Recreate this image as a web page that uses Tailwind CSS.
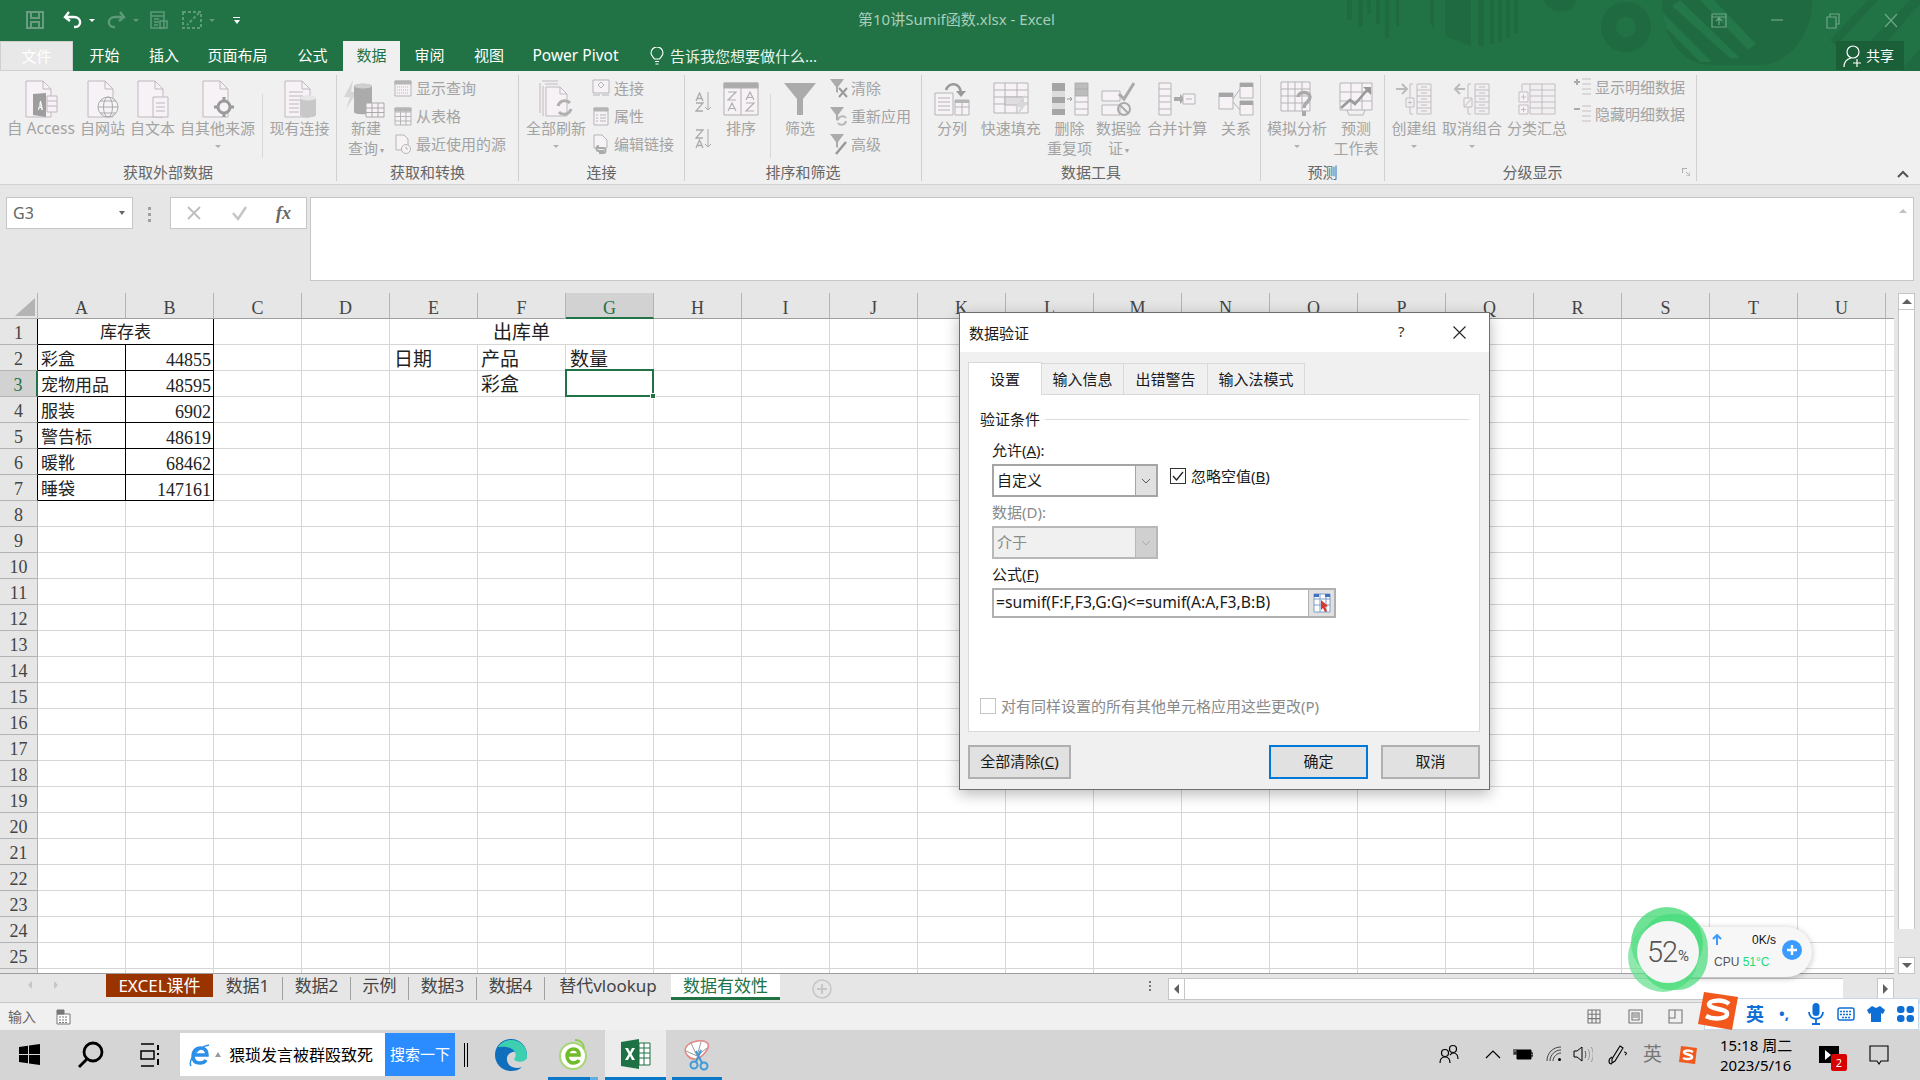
<!DOCTYPE html>
<html lang="zh-CN">
<head>
<meta charset="UTF-8" />
<title>第10讲Sumif函数.xlsx - Excel</title>
<script src="https://cdn.jsdelivr.net/npm/@tailwindcss/browser@4"></script>
</head>
<body class="[font-family:'Noto_Sans','Noto_Sans_CJK_SC',sans-serif] text-[15px] bg-[#e6e6e6] overflow-hidden">
<div class="relative w-[1920px] h-[1080px] flex flex-col overflow-hidden">

  <!-- title bar + tabs -->
  <header class="relative h-[71px] bg-[#217346] shrink-0 overflow-hidden">
    <svg class="absolute left-[1340px] top-0" width="580" height="71" viewBox="0 0 580 71" fill="#1f6a40">
      <path d="M7 0h5v20H7zM18 0h5v27H18zM27 0h4v14h-4zM36 0h4v24h-4zM45 0h4v38h-4zM56 0h3v26h-3z"/>
      <path d="M90 0h4v30l-4-8zM105 0h26v46l-26-10zM138 0h6v46h-6zM150 0h4v44h-4zM158 0h4v42h-4zM166 0h4v38h-4zM174 0h4v33h-4z"/>
      <path d="M204 0h33a17 15 0 0 1-33 0z"/>
      <path fill-rule="evenodd" d="M286 2a25 25 0 1 0 .01 0zM286 17a10 10 0 1 1-.01 0z"/>
      <path d="M322 0h150c2 30-22 65-52 65h-52c-30-2-48-35-46-65z"/>
      <path fill="#247a4b" d="M340 0l60 58h-10l-58-52zM360 0h14l42 44-8 6zM322 12l50 50h-12L326 28z" opacity=".8"/>
      <path d="M490 40L528 0h10L496 46zM510 62L570 0h10v4L522 70zM560 71l20-22v22z"/>
    </svg>
    <!-- quick access -->
    <div class="absolute left-[26px] top-[10px] flex items-center h-[20px]">
      <svg width="18" height="18" viewBox="0 0 18 18" fill="none" stroke="#6a9c80" stroke-width="2"><path d="M1 1h16v16H1z"/><path d="M5 1v6h8V1M5 17v-6h8v6"/></svg>
      <svg class="ml-[19px]" width="19" height="18" viewBox="0 0 19 18" fill="none" stroke="#fff" stroke-width="2.4"><path d="M6 1L2 6l5 4"/><path d="M3 6h8c8 0 8 10 1 10h-1"/></svg>
      <span class="ml-[7px] w-0 h-0 border-x-[3px] border-x-transparent border-t-[3px] border-t-white"></span>
      <svg class="ml-[12px]" width="19" height="18" viewBox="0 0 19 18" fill="none" stroke="#5d9a78" stroke-width="2.4"><path d="M13 1l4 5-5 4"/><path d="M16 6H8c-8 0-8 10-1 10h1"/></svg>
      <span class="ml-[7px] w-0 h-0 border-x-[3px] border-x-transparent border-t-[3px] border-t-[#5d9a78]"></span>
      <svg class="ml-[11px]" width="18" height="18" viewBox="0 0 18 18" fill="none" stroke="#5d9a78" stroke-width="1.5"><path d="M1 1h13v16H1zM1 5h13M4 8h5M4 11h5M4 14h4"/><path d="M10 10h7v7h-7z"/></svg>
      <svg class="ml-[14px]" width="21" height="18" viewBox="0 0 21 18" fill="none" stroke="#5d9a78" stroke-width="2" stroke-dasharray="3 2"><path d="M1 1h18v16H1z"/><path d="M17 2L5 14"/></svg>
      <span class="ml-[6px] w-0 h-0 border-x-[3px] border-x-transparent border-t-[3px] border-t-[#5d9a78]"></span>
      <div class="ml-[18px] flex flex-col gap-[2px] items-center"><span class="w-[7px] h-[1px] bg-white"></span><span class="w-0 h-0 border-x-[3.5px] border-x-transparent border-t-[4px] border-t-white"></span></div>
    </div>
    <div class="absolute left-[858px] top-[8px] leading-[22px] text-[#a9cdb9] whitespace-nowrap">第10讲Sumif函数.xlsx - Excel</div>
    <!-- window buttons -->
    <svg class="absolute left-[1711px] top-[11px]" width="190" height="18" viewBox="0 0 190 18" fill="none" stroke="#6fa688" stroke-width="1.2">
      <path d="M1 3h14v13H1zM1 6h14M8 14V8M5 10l3-3 3 3"/>
      <path d="M60 9h12"/>
      <path d="M116 6h9v11h-9zM119 6V3h9v10h-3"/>
      <path d="M174 3l12 13M186 3l-12 13"/>
    </svg>
    <!-- tabs -->
    <nav class="absolute left-0 top-[41px] h-[30px] flex text-white text-[15px] leading-[29px] text-center whitespace-nowrap">
      <div class="w-[73px] bg-[#e8e8e8] border border-[#d0d0d0] text-white">文件</div>
      <div class="w-[62px] pl-[1px]">开始</div>
      <div class="w-[58px]">插入</div>
      <div class="w-[89px]">页面布局</div>
      <div class="w-[61px]">公式</div>
      <div class="w-[57px] bg-[#f0f0f0] text-[#217346]">数据</div>
      <div class="w-[59px]">审阅</div>
      <div class="w-[60px]">视图</div>
      <div class="w-[115px] text-[15.5px] -translate-x-[1px]">Power Pivot</div>
      <div class="ml-[16px] flex items-center">
        <svg width="14" height="18" viewBox="0 0 14 18" fill="none" stroke="#fff" stroke-width="1.1"><path d="M4.5 12C3 9.5 1 8.5 1 6a6 6 0 0 1 12 0c0 2.500-2 3.500-3.500 6zM5 14.500h4M5.500 17h3"/></svg>
        <span class="ml-[6px] text-[#e8f3ec]">告诉我您想要做什么...</span>
      </div>
    </nav>
    <div class="absolute left-[1836px] top-[41px] w-[68px] h-[29px] bg-[#1b5f39] flex items-center pl-[7px] text-white text-[14px]">
      <svg width="20" height="24" viewBox="0 0 20 24" fill="none" stroke="#fff" stroke-width="1.2"><circle cx="10" cy="8" r="6"/><path d="M1 23c0-5 3-8 7-9M14 15v8M10 19h8"/></svg>
      <span class="ml-[3px]">共享</span>
    </div>
  </header>

  <!-- ribbon -->
  <section class="relative h-[114px] shrink-0 bg-[#f0f0f0] border-b border-[#d2d2d2] pt-[4px] pb-[3px] flex text-[#a3a3a3] text-[15px] leading-[20px] whitespace-nowrap">

    <!-- 获取外部数据 -->
    <div class="w-[337px] border-r border-[#d0d0d0] flex flex-col">
      <div class="flex-1 flex pl-[5px] pt-[5px]">
        <div class="w-[72px] flex flex-col items-center">
          <svg class="h-[38px]" width="36" height="38" viewBox="0 0 36 38" fill="none" stroke="#c0b8c0"><path fill="#f6f2f6" d="M3 1h17l8 8v28H3z"/><path d="M20 1v8h8"/><path fill="#9d9d9d" stroke="none" d="M10 14l13-1v24l-13-2z"/><path fill="#fff" stroke="none" d="M15 30l2-9h1l2 9h-1.500l-.4-2h-1.700l-.4 2zM16.300 26.800h1.300l-.6-3.300z"/><path fill="#f6f2f6" d="M24 16h10v16H24z"/><path d="M24 21h10M24 26h10"/></svg>
          <span class="text-[15.5px]">自 Access</span>
        </div>
        <div class="ml-[1px] w-[49px] flex flex-col items-center">
          <svg class="h-[38px]" width="34" height="38" viewBox="0 0 34 38" fill="none" stroke="#c0b8c0"><path fill="#f6f2f6" d="M2 1h17l8 8v28H2z"/><path d="M19 1v8h8"/><circle cx="22" cy="27" r="10" fill="#f6f2f6" stroke="#aaa"/><ellipse cx="22" cy="27" rx="4.500" ry="10" stroke="#aaa"/><path stroke="#aaa" d="M12 27h20M14 21h16M14 33h16"/></svg>
          <span>自网站</span>
        </div>
        <div class="ml-[1px] w-[49px] flex flex-col items-center">
          <svg class="h-[38px]" width="34" height="38" viewBox="0 0 34 38" fill="none" stroke="#c0b8c0"><path fill="#f6f2f6" d="M2 1h17l8 8v28H2z"/><path d="M19 1v8h8"/><path fill="#f6f2f6" d="M17 17h15v20H17z"/><path d="M20 23h9M20 27h9M20 31h9"/></svg>
          <span>自文本</span>
        </div>
        <div class="ml-[1px] w-[79px] flex flex-col items-center">
          <svg class="h-[38px]" width="34" height="38" viewBox="0 0 34 38" fill="none" stroke="#c0b8c0"><path fill="#f6f2f6" d="M2 1h17l8 8v28H2z"/><path d="M19 1v8h8"/><circle cx="23" cy="27" r="6" fill="#f6f2f6" stroke="#9a9a9a" stroke-width="3"/><path stroke="#9a9a9a" stroke-width="3" d="M23 17v4M23 33v4M13 27h4M29 27h4"/></svg>
          <span>自其他来源</span>
          <span class="mt-[7px] w-0 h-0 border-x-[3px] border-x-transparent border-t-[3px] border-t-[#b0b0b0]"></span>
        </div>
        <span class="ml-[5px] mt-[14px] w-[1px] h-[64px] bg-[#d8d8d8]"></span>
        <div class="ml-[6px] w-[61px] flex flex-col items-center">
          <svg class="h-[38px]" width="34" height="38" viewBox="0 0 34 38" fill="none" stroke="#c0b8c0"><path fill="#f6f2f6" d="M2 1h17l8 8v28H2z"/><path d="M19 1v8h8M6 12h14M6 16h14M6 20h14M6 24h10M6 28h10M6 32h10"/><path fill="#c8c8c8" stroke="none" d="M17 18c0-3 16-3 16 0v17c0 3-16 3-16 0z"/><ellipse cx="25" cy="18" rx="8" ry="2.500" fill="#e6e6e6" stroke="none"/></svg>
          <span>现有连接</span>
        </div>
      </div>
      <div class="text-center text-[#666] h-[18px] leading-[18px]">获取外部数据</div>
    </div>

    <!-- 获取和转换 -->
    <div class="w-[182px] border-r border-[#d0d0d0] flex flex-col">
      <div class="flex-1 flex pl-[7px] pt-[5px]">
        <div class="w-[44px] flex flex-col items-center">
          <svg class="h-[38px] -ml-[4px]" width="42" height="38" viewBox="0 0 42 38"><path fill="#d6d6d6" d="M10 0L1 17h6L3 29l11-17H8z"/><path fill="#ababab" d="M11 6c0-3 18-3 18 0v26c0 3-18 3-18 0z"/><ellipse cx="20" cy="6" rx="9" ry="2.500" fill="#cfcfcf"/><path fill="#f6f2f6" stroke="#aaa" d="M23 23h18v14H23zM23 28h18M23 32.500h18M29 23v14M35 23v14"/></svg>
          <span>新建</span>
          <span>查询<i class="not-italic text-[8px] align-middle ml-[2px]">▾</i></span>
        </div>
        <div class="ml-[6px] -mt-[6px] flex flex-col">
          <div class="h-[28px] flex items-center"><svg width="18" height="17" viewBox="0 0 18 17" fill="#f6f2f6" stroke="#b5b5b5"><path d="M1 1h16v15H1z"/><path fill="#b5b5b5" d="M1 1h16v3H1z"/><path d="M3 7h12M3 10h12M3 13h12" stroke-dasharray="1 1"/></svg><span class="ml-[4px]">显示查询</span></div>
          <div class="h-[28px] flex items-center"><svg width="18" height="19" viewBox="0 0 18 19" fill="#f6f2f6" stroke="#b5b5b5"><path d="M1 1h16v17H1zM1 5h16M1 9.500h16M1 14h16M6.500 1v17M12 1v17"/><path fill="#b5b5b5" d="M1 1h16v3H1z"/></svg><span class="ml-[4px]">从表格</span></div>
          <div class="h-[28px] flex items-center"><svg width="18" height="20" viewBox="0 0 18 20" fill="#f6f2f6" stroke="#b5b5b5"><path d="M2 1h8l4 4v11H2z"/><circle cx="12" cy="15" r="4.500"/><path d="M12 12.500V15h2"/></svg><span class="ml-[4px]">最近使用的源</span></div>
        </div>
      </div>
      <div class="text-center text-[#666] h-[18px] leading-[18px]">获取和转换</div>
    </div>

    <!-- 连接 -->
    <div class="w-[166px] border-r border-[#d0d0d0] flex flex-col">
      <div class="flex-1 flex pl-[6px] pt-[5px]">
        <div class="w-[62px] flex flex-col items-center">
          <svg class="h-[38px]" width="36" height="38" viewBox="0 0 36 38" fill="none" stroke="#c0b8c0"><path d="M4 1h16M2 3v30"/><path d="M7 4h13M5 6v30" /><path fill="#f6f2f6" d="M8 7h14l7 7v22H8z"/><path d="M22 7v7h7"/><path stroke="#b0b0b0" stroke-width="3" d="M20 26a7 7 0 0 1 12-3M33 29a7 7 0 0 1-12 3"/></svg>
          <span>全部刷新</span>
          <span class="mt-[7px] w-0 h-0 border-x-[3px] border-x-transparent border-t-[3px] border-t-[#b0b0b0]"></span>
        </div>
        <div class="ml-[5px] -mt-[6px] flex flex-col">
          <div class="h-[28px] flex items-center"><svg width="18" height="18" viewBox="0 0 18 18" fill="#f6f2f6" stroke="#b5b5b5"><path d="M1 1h16v13H1z"/><path d="M9 3l3 3-3 3-3-3zM1 16h7M10 16h7"/></svg><span class="ml-[4px]">连接</span></div>
          <div class="h-[28px] flex items-center"><svg width="18" height="19" viewBox="0 0 18 19" fill="#f6f2f6" stroke="#b5b5b5"><path d="M2 1h14v17H2z"/><path fill="#b5b5b5" d="M2 1h14v3H2z"/><path d="M4 8h2M8 8h6M4 11h2M8 11h6M4 14h2M8 14h6"/></svg><span class="ml-[4px]">属性</span></div>
          <div class="h-[28px] flex items-center"><svg width="18" height="20" viewBox="0 0 18 20" fill="#f6f2f6" stroke="#b5b5b5"><path d="M2 1h8l5 5v8H2z"/><path fill="none" stroke="#aaa" stroke-width="2" d="M6 14h5a2.500 2.500 0 0 1 0 5H7M12 17H7a2.500 2.500 0 0 1 0-5"/></svg><span class="ml-[4px]">编辑链接</span></div>
        </div>
      </div>
      <div class="text-center text-[#666] h-[18px] leading-[18px]">连接</div>
    </div>

    <!-- 排序和筛选 -->
    <div class="w-[237px] border-r border-[#d0d0d0] flex flex-col">
      <div class="flex-1 flex pl-[10px] pt-[5px]">
        <div class="w-[18px] flex flex-col gap-[17px] pt-[12px]">
          <svg width="17" height="20" viewBox="0 0 17 20" fill="none" stroke="#aaa"><path stroke-width="1.300" d="M1 9l3.500-8L8 9M2.200 6.500h4.600M1 11h7l-7 8h7"/><path d="M13 0v18M10 15l3 3 3-3"/></svg>
          <svg width="17" height="20" viewBox="0 0 17 20" fill="none" stroke="#aaa"><path stroke-width="1.300" d="M1 1h7L1 9h7M1 19l3.500-8L8 19M2.200 16.500h4.600"/><path d="M13 0v18M10 15l3 3 3-3"/></svg>
        </div>
        <div class="ml-[8px] w-[40px] flex flex-col items-center">
          <svg class="h-[38px]" width="36" height="34" viewBox="0 0 36 34" fill="none" stroke="#b0b0b0"><path fill="#f6f2f6" d="M1 1h34v32H1zM18 1v32"/><path fill="#ababab" d="M1 1h34v5H1z"/><path stroke-width="1.200" d="M5 10h8l-8 8h8M5 29l4-8 4 8M6.200 26.500h5.600M23 18l4-8 4 8M24.200 15.500h5.600M23 21h8l-8 8h8"/></svg>
          <span>排序</span>
        </div>
        <span class="ml-[9px] mt-[14px] w-[1px] h-[64px] bg-[#d8d8d8]"></span>
        <div class="ml-[9px] w-[40px] flex flex-col items-center">
          <svg class="h-[38px]" width="34" height="34" viewBox="0 0 34 34" fill="#ababab"><path d="M1 1h32L20 17v16h-6V17z"/></svg>
          <span>筛选</span>
        </div>
        <div class="ml-[9px] -mt-[6px] flex flex-col">
          <div class="h-[28px] flex items-center"><svg width="19" height="20" viewBox="0 0 19 20"><path fill="#ababab" d="M1 1h14L9 9v6L7 14V9z"/><path stroke="#999" stroke-width="2" d="M10 10l8 9M18 10l-8 9"/></svg><span class="ml-[3px]">清除</span></div>
          <div class="h-[28px] flex items-center"><svg width="19" height="20" viewBox="0 0 19 20"><path fill="#ababab" d="M1 1h14L9 9v6L7 14V9z"/><path fill="none" stroke="#b8b8b8" stroke-width="2" d="M9 14a4.500 4.500 0 0 1 8-2M17 15a4.500 4.500 0 0 1-8 2"/></svg><span class="ml-[3px]">重新应用</span></div>
          <div class="h-[28px] flex items-center"><svg width="19" height="22" viewBox="0 0 19 22"><path fill="#ababab" d="M1 1h14L9 9v6L7 14V9z"/><path stroke="#999" stroke-width="2.500" d="M17 9L7 21"/></svg><span class="ml-[3px]">高级</span></div>
        </div>
      </div>
      <div class="text-center text-[#666] h-[18px] leading-[18px]">排序和筛选</div>
    </div>

    <!-- 数据工具 -->
    <div class="w-[339px] border-r border-[#d0d0d0] flex flex-col">
      <div class="flex-1 flex pl-[6px] pt-[5px]">
        <div class="w-[48px] flex flex-col items-center">
          <svg class="h-[38px]" width="36" height="34" viewBox="0 0 36 34" fill="none" stroke="#b5b5b5"><path fill="#f6f2f6" d="M1 11h18v22H1zM4 16h12M4 20h12M4 24h12M4 28h12"/><path fill="#f6f2f6" d="M21 18h14v15H21zM21 25h14M28 18v15"/><path fill="#b5b5b5" stroke="none" d="M21 18h14v3H21z"/><path stroke="#999" stroke-width="2.500" d="M12 8c3-8 13-8 15 2"/><path fill="#999" stroke="none" d="M22 9h10l-5 6z"/></svg>
          <span>分列</span>
        </div>
        <div class="w-[70px] flex flex-col items-center">
          <svg class="h-[38px]" width="36" height="34" viewBox="0 0 36 34" fill="#f6f2f6" stroke="#b5b5b5"><path d="M1 1h34v30H1zM1 8h34M1 15h34M1 22h34M12 1v30M24 1v30"/><path fill="#e0dce0" d="M12 15h18v8H12z"/><path fill="#d8d8d8" stroke="none" d="M32 12L22 25h5l-3 9 11-14h-6z"/></svg>
          <span>快速填充</span>
        </div>
        <div class="ml-[-4px] w-[56px] flex flex-col items-center">
          <svg class="h-[38px]" width="38" height="34" viewBox="0 0 38 34" fill="#f6f2f6" stroke="#b5b5b5"><path fill="#a5a5a5" stroke="none" d="M1 1h13v32H1z"/><path fill="#dcdcdc" stroke="none" d="M1 9h13v6H1zM1 21h13v6H1z"/><path d="M24 1h13v32H24zM24 7h13M24 14h13M24 20h13M24 27h13"/><path fill="#a5a5a5" stroke="none" d="M24 1h13v6H24zM24 7h13v7H24z" opacity=".7"/><path stroke="#999" d="M16 17h5M19 15l2 2-2 2"/></svg>
          <span>删除</span><span>重复项</span>
        </div>
        <div class="ml-[-3px] w-[48px] flex flex-col items-center">
          <svg class="h-[38px]" width="34" height="34" viewBox="0 0 34 34" fill="#f6f2f6" stroke="#b5b5b5"><path d="M1 9h18v10H1zM1 23h18v10H1z"/><path fill="none" stroke="#aaa" stroke-width="3" d="M18 12l5 5L33 1"/><circle cx="23" cy="27" r="6" fill="none" stroke="#aaa" stroke-width="2"/><path stroke="#aaa" stroke-width="2" d="M19 23l8 8"/></svg>
          <span>数据验</span>
          <span>证<i class="not-italic text-[8px] align-middle ml-[2px]">▾</i></span>
        </div>
        <div class="ml-[3px] w-[64px] flex flex-col items-center">
          <svg class="h-[38px]" width="38" height="34" viewBox="0 0 38 34" fill="#f6f2f6" stroke="#b5b5b5"><path d="M1 1h12v32H1zM1 7h12M1 14h12M1 20h12M1 27h12"/><path fill="#aaa" stroke="none" d="M16 15h6v-3l5 5-5 5v-3h-6z"/><path d="M25 12h12v10H25zM28 17h6"/></svg>
          <span>合并计算</span>
        </div>
        <div class="ml-[3px] w-[48px] flex flex-col items-center">
          <svg class="h-[38px]" width="36" height="34" viewBox="0 0 36 34" fill="#f6f2f6" stroke="#b5b5b5"><path d="M1 11h14v16H1zM22 1h13v15H22zM22 19h13v14H22zM15 17l7-10M15 20l7 8"/><path fill="#a5a5a5" stroke="none" d="M1 11h14v4H1zM22 1h13v4H22zM22 19h13v4H22z"/></svg>
          <span>关系</span>
        </div>
      </div>
      <div class="text-center text-[#666] h-[18px] leading-[18px]">数据工具</div>
    </div>

    <!-- 预测 -->
    <div class="w-[124px] border-r border-[#d0d0d0] flex flex-col">
      <div class="flex-1 flex pl-[5px] pt-[5px]">
        <div class="w-[62px] flex flex-col items-center">
          <svg class="h-[38px]" width="34" height="36" viewBox="0 0 34 36" fill="#f6f2f6" stroke="#b5b5b5"><path d="M1 1h29v29H1zM1 8h29M1 15h29M1 22h29M8 1v29M15 1v29M22 1v29"/><path fill="none" stroke="#aaa" stroke-width="3.500" d="M18 16c0-6 12-6 12 0 0 5-6 5-6 11"/><path fill="#aaa" stroke="none" d="M22 30h4v5h-4z"/></svg>
          <span>模拟分析</span>
          <span class="mt-[7px] w-0 h-0 border-x-[3px] border-x-transparent border-t-[3px] border-t-[#b0b0b0]"></span>
        </div>
        <div class="ml-[4px] w-[48px] flex flex-col items-center">
          <svg class="h-[38px]" width="34" height="34" viewBox="0 0 34 34" fill="#f6f2f6" stroke="#b5b5b5"><path d="M1 1h32v27H1zM1 10h32M1 19h32M12 1v27M23 1v27"/><path fill="none" stroke="#999" stroke-width="2.500" d="M2 26l9-8 5 4 13-15"/><path fill="#999" stroke="none" d="M24 5h8v8z"/><path fill="none" d="M8 28l2 5h14l2-5"/></svg>
          <span>预测</span><span>工作表</span>
        </div>
      </div>
      <div class="text-center text-[#666] h-[18px] leading-[18px]">预测</div>
    </div>

    <!-- 分级显示 -->
    <div class="relative w-[312px] border-r border-[#d0d0d0] flex flex-col">
      <div class="flex-1 flex pl-[6px] pt-[5px]">
        <div class="w-[46px] flex flex-col items-center">
          <svg class="h-[38px]" width="38" height="34" viewBox="0 0 38 34" fill="none" stroke="#c4bcc4"><path stroke="#bbb" stroke-width="2" d="M1 7h10M7 2l5 5-5 5"/><path d="M18 2h-3v14M15 25v7h3M22 2h14v30H22zM22 8h14M22 14h14M22 20h14M22 26h14"/><path d="M11 16h8v9h-8zM13 20.500h4M15 18.500v4"/><path d="M26 5h6M26 11h6M26 17h6M26 23h6M26 29h6"/></svg>
          <span>创建组</span>
          <span class="mt-[7px] w-0 h-0 border-x-[3px] border-x-transparent border-t-[3px] border-t-[#b0b0b0]"></span>
        </div>
        <div class="ml-[5px] w-[60px] flex flex-col items-center">
          <svg class="h-[38px]" width="38" height="34" viewBox="0 0 38 34" fill="none" stroke="#c4bcc4"><path stroke="#bbb" stroke-width="2" d="M12 7H2M7 2L2 7l5 5"/><path d="M18 2h-3v14M15 25v7h3M22 2h14v30H22zM22 8h14M22 14h14M22 20h14M22 26h14"/><path d="M11 16h8v9h-8zM12 24l6-7"/><path d="M26 5h6M26 11h6M26 17h6M26 23h6M26 29h6"/></svg>
          <span>取消组合</span>
          <span class="mt-[7px] w-0 h-0 border-x-[3px] border-x-transparent border-t-[3px] border-t-[#b0b0b0]"></span>
        </div>
        <div class="ml-[5px] w-[60px] flex flex-col items-center">
          <svg class="h-[38px]" width="38" height="34" viewBox="0 0 38 34" fill="none" stroke="#c4bcc4"><path d="M12 2H4v7M12 2h25v30H12zM12 8h25M12 14h25M12 20h25M12 26h25M24 2v30"/><path fill="#f6f2f6" d="M1 10h9v10H1zM1 23h9v9H1zM3 15h5M5.500 12.500v5M3 27.500h5M5.500 25v5"/></svg>
          <span>分类汇总</span>
        </div>
        <div class="ml-[7px] -mt-[7px] flex flex-col">
          <div class="h-[27px] flex items-center"><svg width="18" height="18" viewBox="0 0 18 18" fill="none" stroke="#c4bcc4"><path stroke="#aaa" stroke-width="2" d="M0 4h6M3 1v6"/><path d="M8 1h9M8 6h9M8 11h9M8 16h9"/></svg><span class="ml-[3px]">显示明细数据</span></div>
          <div class="h-[27px] flex items-center"><svg width="18" height="18" viewBox="0 0 18 18" fill="none" stroke="#c4bcc4"><path stroke="#aaa" stroke-width="2" d="M0 4h6"/><path d="M8 1h9M8 6h9M8 11h9M8 16h9"/></svg><span class="ml-[3px]">隐藏明细数据</span></div>
        </div>
      </div>
      <div class="text-center text-[#666] h-[18px] leading-[18px] -translate-x-[8px]">分级显示</div>
      <svg class="absolute right-[6px] bottom-[5px]" width="8" height="8" viewBox="0 0 8 8" fill="none" stroke="#b0b0b0"><path d="M0 .5h5M.5 0v5M4 4l4 4M8 4v4H4"/></svg>
    </div>
    <svg class="absolute left-[1897px] top-[99px]" width="12" height="8" viewBox="0 0 12 8" fill="none" stroke="#555" stroke-width="2"><path d="M1 7l5-5 5 5"/></svg>
  </section>

  <!-- formula bar -->
  <section class="h-[108px] shrink-0 bg-[#e6e6e6] pt-[12px] pl-[6px] flex items-start">
    <div class="w-[127px] h-[32px] bg-white border border-[#c6c6c6] flex items-center justify-between pl-[6px] pr-[7px] text-[#666] text-[16px]">G3<span class="w-0 h-0 border-x-[3.5px] border-x-transparent border-t-[4px] border-t-[#666]"></span></div>
    <div class="ml-[15px] mt-[10px] flex flex-col gap-[3px]"><span class="w-[3px] h-[3px] bg-[#a0a0a0]"></span><span class="w-[3px] h-[3px] bg-[#a0a0a0]"></span><span class="w-[3px] h-[3px] bg-[#a0a0a0]"></span></div>
    <div class="ml-[19px] w-[137px] h-[32px] bg-white border border-[#c6c6c6] flex items-center pl-[15px]">
      <svg width="16" height="16" viewBox="0 0 16 16" fill="none" stroke="#bdbdbd" stroke-width="1.800"><path d="M2 2l12 12M14 2L2 14"/></svg>
      <svg class="ml-[29px]" width="17" height="16" viewBox="0 0 17 16" fill="none" stroke="#c4c4c4" stroke-width="2.400"><path d="M2 8l5 6L15 2"/></svg>
      <span class="ml-[28px] italic text-[#666] font-bold text-[18px] [font-family:'Liberation_Serif',serif]">fx</span>
    </div>
    <div class="relative ml-[3px] w-[1604px] h-[84px] bg-white border border-[#c6c6c6]">
      <span class="absolute right-[6px] top-[11px] w-0 h-0 border-x-[4px] border-x-transparent border-b-[4px] border-b-[#c0c0c0]"></span>
    </div>
  </section>

  <!-- sheet -->
  <section class="h-[681px] shrink-0 flex bg-[#e6e6e6] overflow-hidden">
    <div id="grid" class="w-[1894px] h-[681px] grid grid-cols-[38px_repeat(21,88px)_8px] grid-rows-[26px_repeat(25,26px)_5px] bg-white border-b border-[#9e9e9e] [font-family:'Liberation_Serif','Noto_Sans_CJK_SC',serif] text-[18px] text-[#222] overflow-hidden"></div>
    <div class="ml-[4px] w-[17px] flex flex-col">
      <div class="h-[17px] bg-white border border-[#c6c6c6] flex items-center justify-center"><span class="w-0 h-0 border-x-[5px] border-x-transparent border-b-[5px] border-b-[#606060]"></span></div>
      <div class="flex-1 bg-white border-x border-[#c6c6c6] h-[619px]"></div>
      <div class="h-[28px] bg-[#e6e6e6]"></div>
      <div class="h-[17px] bg-white border border-[#c6c6c6] flex items-center justify-center"><span class="w-0 h-0 border-x-[5px] border-x-transparent border-t-[5px] border-t-[#606060]"></span></div>
    </div>
  </section>

  <!-- sheet tabs -->
  <section class="relative h-[29px] shrink-0 bg-[#e6e6e6] border-b border-[#c6c6c6] flex text-[17px] text-[#444] whitespace-nowrap">
    <div class="w-[104px] flex items-center pl-[28px] gap-[22px] pb-[6px]"><span class="w-0 h-0 border-y-[4px] border-y-transparent border-r-[4px] border-r-[#c6c6c6]"></span><span class="w-0 h-0 border-y-[4px] border-y-transparent border-l-[4px] border-l-[#c6c6c6]"></span></div>
    <div class="flex h-[23px] text-center leading-[18px] pt-[3px] box-content">
      <div class="w-[107px] ml-[2px] h-[23px] -mt-[3px] pt-[3px] bg-[#993300] text-white">EXCEL课件</div>
      <div class="w-[70px] border-r border-[#a0a0a0]">数据1</div>
      <div class="w-[68px] border-r border-[#a0a0a0]">数据2</div>
      <div class="w-[58px] border-r border-[#a0a0a0]">示例</div>
      <div class="w-[68px] border-r border-[#a0a0a0]">数据3</div>
      <div class="w-[68px] border-r border-[#a0a0a0]">数据4</div>
      <div class="w-[126px]">替代vlookup</div>
      <div class="w-[109px] h-[26px] -mt-[3px] pt-[3px] bg-white border-b-[3px] border-[#217346] text-[#217346]">数据有效性</div>
    </div>
    <svg class="absolute left-[812px] top-[5px]" width="20" height="20" viewBox="0 0 20 20" fill="none" stroke="#c6c6c6" stroke-width="1.500"><circle cx="10" cy="10" r="9"/><path stroke-width="2" d="M5 10h10M10 5v10"/></svg>
    <div class="absolute left-[1149px] top-[7px] flex flex-col gap-[2px]"><span class="w-[2px] h-[2px] bg-[#777]"></span><span class="w-[2px] h-[2px] bg-[#777]"></span><span class="w-[2px] h-[2px] bg-[#777]"></span></div>
    <div class="absolute left-[1168px] top-[4px] w-[726px] h-[22px] flex">
      <div class="w-[17px] bg-white border border-[#c6c6c6] flex items-center justify-center"><span class="w-0 h-0 border-y-[5px] border-y-transparent border-r-[5px] border-r-[#606060]"></span></div>
      <div class="w-[658px] bg-white border-y border-[#c6c6c6]"></div>
      <div class="w-[34px]"></div>
      <div class="w-[17px] bg-white border border-[#c6c6c6] flex items-center justify-center"><span class="w-0 h-0 border-y-[5px] border-y-transparent border-l-[5px] border-l-[#606060]"></span></div>
    </div>
  </section>

  <!-- status bar -->
  <section class="relative h-[27px] shrink-0 bg-[#f0f0f0] flex items-center pl-[8px] text-[14px] text-[#666]">
    <span>输入</span>
    <svg class="ml-[20px]" width="15" height="16" viewBox="0 0 15 16" fill="#fff" stroke="#777"><path d="M1 5h13v10H1z"/><path fill="#777" d="M1 1h7v4H1z"/><path stroke-dasharray="2 1" d="M3 8h9M3 11h9M3 13.500h9"/></svg>
    <svg class="absolute left-[1587px] top-[6px]" width="100" height="15" viewBox="0 0 100 15" fill="none" stroke="#777" stroke-width="1.100">
      <path d="M1 1h12v13H1zM1 5.300h12M1 9.600h12M5 1v13M9 1v13"/>
      <path d="M42 1h13v13H42zM45 4h7v7h-7zM46 6h5M46 8h5"/>
      <path d="M82 1h13v13H82zM82 9h6V1"/>
    </svg>
  </section>

  <!-- taskbar -->
  <footer class="relative h-[50px] shrink-0 bg-[#d5d5d5] text-black">
    <svg class="absolute left-[19px] top-[14px]" width="21" height="21" viewBox="0 0 21 21" fill="#000"><path d="M0 3l9-1.300V10H0zM10 1.500L21 0v10H10zM0 11h9v8.300L0 18zM10 11h11v10l-11-1.500z"/></svg>
    <svg class="absolute left-[77px] top-[11px]" width="28" height="28" viewBox="0 0 28 28" fill="none" stroke="#000" stroke-width="2.800"><circle cx="16" cy="11" r="9"/><path d="M10 18l-8 8"/></svg>
    <svg class="absolute left-[140px] top-[13px]" width="20" height="24" viewBox="0 0 20 24" fill="none" stroke="#000" stroke-width="1.500"><path d="M1 1h13M1 23h13M1 8h13v8H1z"/><path stroke-width="2" d="M18 2v5M18 10v2M18 16v6"/></svg>
    <div class="absolute left-[180px] top-[3px] w-[275px] h-[43px] bg-white flex items-center">
      <svg class="ml-[9px]" width="22" height="24" viewBox="0 0 22 24" fill="none" stroke="#2b8fe8"><path stroke-width="3.500" d="M5 12h13c0-5-3-7-7-7-4 0-7 3-7 8s3 7 7 7c3 0 5-1 6-3"/><path stroke-width="1.500" d="M2 23C-1 18 8 4 20 2"/></svg>
      <span class="ml-[4px] w-0 h-0 border-x-[3px] border-x-transparent border-b-[5px] border-b-[#999]"></span>
      <span class="ml-[8px] w-[147px] text-[16px] whitespace-nowrap">猥琐发言被群殴致死</span>
      <span class="ml-[9px] w-[70px] h-[43px] bg-[#2a8cff] text-white text-center leading-[43px] text-[15px]">搜索一下</span>
    </div>
    <div class="absolute left-[464px] top-[13px] w-[4px] h-[24px] border-x border-black"></div>
    <svg class="absolute left-[495px] top-[9px]" width="32" height="32" viewBox="0 0 32 32">
      <path fill="#0f6fbd" d="M16 0C7 0 0 7 0 16c0 9 7 16 16 16 4 0 8-1 11-4-5 2-14 1-15-7-1-5 4-9 9-8 5 0 9 3 11 7V16C32 7 25 0 16 0z"/>
      <path fill="#3dd0b0" d="M3 8c5-8 18-10 25-2 3 3 4 7 4 12-1 6-12 6-13 2 3-3 2-9-4-11C10 7 5 8 3 8z"/>
    </svg>
    <svg class="absolute left-[559px] top-[9px]" width="28" height="32" viewBox="0 0 28 32" fill="none"><circle cx="14" cy="17" r="13" fill="#fff" stroke="#a7d676" stroke-width="2"/><path stroke="#6fbb29" stroke-width="3.500" d="M8 16h12c0-4-2-6-6-6-3 0-6 3-6 7s3 7 6 7c3 0 5-1 6-3"/><path stroke="#8fce4a" stroke-width="2" d="M16 1c6 0 9 4 9 9"/></svg>
    <div class="absolute left-[605px] top-0 w-[61px] h-[50px] bg-[#ececec] border-b-[3px] border-[#0a78c8] flex items-center justify-center">
      <svg width="30" height="30" viewBox="0 0 30 30"><path fill="#1e7145" d="M0 3l18-3v30L0 27z"/><path fill="#fff" d="M4 9h3l2 4 2-4h3l-3.500 6 3.500 6h-3l-2-4-2 4H4l3.500-6z"/><path fill="#fff" stroke="#1e7145" d="M18 4h11v22H18z"/><path stroke="#1e7145" d="M18 9h11M18 14h11M18 19h11M23 4v22"/></svg>
    </div>
    <svg class="absolute left-[683px] top-[9px]" width="30" height="32" viewBox="0 0 30 32" fill="none"><path fill="#fff" stroke="#e28585" stroke-width="1.500" d="M3 8C8 1 22 0 25 5c2 4-5 13-12 15C7 21 0 14 3 8z"/><path stroke="#999" d="M8 4l6 13M18 3l-4 14M3 12l11 5M24 9l-10 8"/><circle cx="11" cy="26" r="3.500" stroke="#3f9bd9" stroke-width="2"/><circle cx="21" cy="27" r="3.500" stroke="#3f9bd9" stroke-width="2"/><path stroke="#3f9bd9" stroke-width="2" d="M13 23l5-12M19 24l-6-12"/></svg>
    <div class="absolute left-[548px] bottom-0 w-[42px] h-[3px] bg-[#0a78c8]"></div>
    <div class="absolute left-[590px] bottom-0 w-[8px] h-[3px] bg-[#66aee0]"></div>
    <div class="absolute left-[672px] bottom-0 w-[50px] h-[3px] bg-[#0a78c8]"></div>

    <!-- tray -->
    <svg class="absolute left-[1439px] top-[14px]" width="20" height="20" viewBox="0 0 20 20" fill="none" stroke="#000" stroke-width="1.200"><circle cx="6" cy="9" r="3.500"/><circle cx="14" cy="5" r="3.500"/><path d="M1 19c0-4 2-6 5-6s5 2 5 6M11 11c1-1 2-2 3-2 3 0 5 2 5 6"/></svg>
    <svg class="absolute left-[1485px] top-[20px]" width="16" height="9" viewBox="0 0 16 9" fill="none" stroke="#000" stroke-width="1.200"><path d="M1 8l7-7 7 7"/></svg>
    <svg class="absolute left-[1513px] top-[17px]" width="20" height="14" viewBox="0 0 20 14" fill="none" stroke="#000"><path fill="#000" d="M4 3h14v9H4z"/><path d="M18 6h2v3h-2M0 7h4M1 2v4h2V2"/></svg>
    <svg class="absolute left-[1546px] top-[16px]" width="16" height="16" viewBox="0 0 16 16" fill="none" stroke="#444"><path d="M1 15C1 7 7 1 15 1M4 15c0-6 5-11 11-11M7 15c0-4 4-8 8-8"/><circle cx="13.500" cy="13.500" r="1.500" fill="#000" stroke="none"/></svg>
    <svg class="absolute left-[1573px] top-[16px]" width="20" height="17" viewBox="0 0 20 17" fill="none" stroke="#000"><path d="M1 5h3l5-4v14l-5-4H1z"/><path stroke="#555" d="M12 5c1 2 1 5 0 7"/><path stroke="#999" d="M15 3c2 3 2 8 0 11M18 1c3 4 3 11 0 15"/></svg>
    <svg class="absolute left-[1608px] top-[15px]" width="20" height="20" viewBox="0 0 20 20" fill="none" stroke="#000" stroke-width="1.100"><path d="M12 1l3 2-8 13-3 2 0-4zM16 7c3 0 3 2 1 3M4 12c-4 2-4 7 0 7"/></svg>
    <span class="absolute left-[1643px] top-[12px] text-[19px] leading-[24px] text-[#777]">英</span>
    <svg class="absolute left-[1678px] top-[15px]" width="20" height="20" viewBox="0 0 20 20"><path fill="#f2581c" d="M3 1l16 2-2 16-16-2z"/><path fill="none" stroke="#fff" stroke-width="2.500" d="M15 7c-3-2-8-2-9 0 0 3 8 2 8 5 0 2-5 3-9 1"/></svg>
    <div class="absolute left-[1720px] top-[5px] text-[15px] leading-[20px] whitespace-nowrap">15:18 周二</div>
    <div class="absolute left-[1720px] top-[25px] text-[15px] leading-[20px] whitespace-nowrap">2023/5/16</div>
    <div class="absolute left-[1819px] top-[16px] w-[20px] h-[17px] bg-black flex items-center pl-[6px]"><span class="w-0 h-0 border-y-[5px] border-y-transparent border-l-[6px] border-l-white"></span></div>
    <div class="absolute left-[1831px] top-[24px] w-[16px] h-[17px] bg-[#d70000] rounded-[2px] text-white text-[11px] leading-[17px] text-center">2</div>
    <svg class="absolute left-[1869px] top-[15px]" width="20" height="20" viewBox="0 0 20 20" fill="none" stroke="#000" stroke-width="1.100"><path d="M1 1h18v15h-7l-2 3-2-3H1z"/></svg>
  </footer>

  <!-- data validation dialog -->
  <div class="absolute left-[959px] top-[312px] w-[531px] h-[478px] bg-[#f0f0f0] border border-[#6e6e6e] shadow-[0_4px_14px_rgba(0,0,0,0.28)] text-[15px] leading-[20px] text-[#1a1a1a] whitespace-nowrap">
    <div class="h-[39px] bg-white flex items-center pl-[9px] relative">
      <span>数据验证</span>
      <span class="absolute left-[438px] top-[8px] text-[#333]">?</span>
      <svg class="absolute left-[493px] top-[13px]" width="13" height="13" viewBox="0 0 13 13" stroke="#222" stroke-width="1.100"><path d="M.5.5l12 12M12.500.5l-12 12"/></svg>
    </div>
    <div class="pl-[8px] pt-[9px] flex items-end h-[42px] relative z-10">
      <div class="w-[74px] h-[33px] -mb-[1px] bg-white border border-[#d9d9d9] border-b-0 text-center leading-[33px]">设置</div>
      <div class="w-[82px] h-[31px] bg-[#f0f0f0] border-r border-t border-[#d9d9d9] text-center leading-[31px]">输入信息</div>
      <div class="w-[84px] h-[31px] bg-[#f0f0f0] border-r border-t border-[#d9d9d9] text-center leading-[31px]">出错警告</div>
      <div class="w-[97px] h-[31px] bg-[#f0f0f0] border-r border-t border-[#d9d9d9] text-center leading-[31px]">输入法模式</div>
    </div>
    <div class="ml-[8px] w-[512px] h-[338px] bg-white border border-[#d9d9d9] relative pl-[11px]">
      <div class="flex items-center h-[20px] mt-[14px]"><span>验证条件</span><span class="ml-[5px] w-[424px] h-[1px] bg-[#dcdcdc]"></span></div>
      <div class="pl-[12px]">
        <div class="mt-[11px] h-[20px]">允许(<u>A</u>):</div>
        <div class="mt-[4px] flex items-start">
          <div class="w-[166px] h-[33px] border-2 border-[#a5a5a5] flex bg-white"><span class="flex-1 pl-[3px] leading-[29px]">自定义</span><span class="w-[21px] bg-[#e1e1e1] border-l border-[#a5a5a5] flex items-center justify-center"><svg width="10" height="6" viewBox="0 0 10 6" fill="none" stroke="#555"><path d="M1 1l4 4 4-4"/></svg></span></div>
          <div class="ml-[12px] mt-[4px] w-[16px] h-[16px] border border-[#333] flex items-center justify-center"><svg width="12" height="10" viewBox="0 0 12 10" fill="none" stroke="#222" stroke-width="1.300"><path d="M1 5l3.500 4L11 1"/></svg></div>
          <span class="ml-[5px] mt-[2px]">忽略空值(<u>B</u>)</span>
        </div>
        <div class="mt-[5px] h-[20px] text-[#8a8a8a]">数据(D):</div>
        <div class="mt-[4px] w-[166px] h-[33px] border-2 border-[#b8b8b8] flex bg-[#f0f0f0] text-[#8a8a8a]"><span class="flex-1 pl-[3px] leading-[29px]">介于</span><span class="w-[21px] bg-[#d0d0d0] border-l border-[#b8b8b8] flex items-center justify-center"><svg width="10" height="6" viewBox="0 0 10 6" fill="none" stroke="#aaa"><path d="M1 1l4 4 4-4"/></svg></span></div>
        <div class="mt-[5px] h-[20px]">公式(<u>F</u>)</div>
        <div class="mt-[4px] w-[344px] h-[30px] border-2 border-[#b0b0b0] flex bg-white text-[15.7px]">
          <span class="flex-1 pl-[2px] leading-[24px] overflow-hidden">=sumif(F:F,F3,G:G)&lt;=sumif(A:A,F3,B:B)</span>
          <span class="w-[26px] bg-[#e1e1e1] border-l border-[#b0b0b0] flex items-center justify-center"><svg width="18" height="20" viewBox="0 0 18 20" fill="#fff" stroke="#7c9cc8"><path d="M1 1h16v18H1zM1 6h16M1 12h16M7 1v18M13 1v18"/><path fill="#3f6fc0" stroke="none" d="M1 1h5v3H1zM12 1h5v3h-5z"/><path fill="#d8392b" stroke="none" d="M8 7l7 6-3 1 2 4-2 1-2-4-2 2z"/></svg></span>
        </div>
      </div>
      <div class="absolute left-[11px] top-[301px] flex items-center text-[#8a8a8a]"><span class="w-[16px] h-[16px] bg-white border border-[#c4c4c4]"></span><span class="ml-[5px]">对有同样设置的所有其他单元格应用这些更改(P)</span></div>
    </div>
    <div class="absolute left-[8px] top-[432px] w-[103px] h-[34px] bg-[#e1e1e1] border-2 border-[#b0b0b0] text-center leading-[29px]">全部清除(<u>C</u>)</div>
    <div class="absolute left-[309px] top-[432px] w-[99px] h-[34px] bg-[#e1e1e1] border-2 border-[#0078d7] text-center leading-[29px]">确定</div>
    <div class="absolute left-[421px] top-[432px] w-[99px] h-[34px] bg-[#e1e1e1] border-2 border-[#b0b0b0] text-center leading-[29px]">取消</div>
  </div>

  <!-- memory / cpu widget -->
  <div class="absolute left-[1668px] top-[927px] w-[144px] h-[50px] rounded-r-[25px] bg-[#f7f7f7] shadow-[0_1px_6px_rgba(0,0,0,0.25)] pl-[46px] [font-family:'Liberation_Sans',sans-serif]">
    <svg class="absolute left-[44px] top-[7px]" width="10" height="11" viewBox="0 0 10 11" fill="none" stroke="#3b9bff" stroke-width="2"><path d="M5 11V2M1 5l4-4 4 4"/></svg>
    <span class="absolute left-[84px] top-[6px] text-[12px] leading-[14px] text-[#111]">0K/s</span>
    <span class="absolute left-[46px] top-[27px] text-[12px] leading-[16px] text-[#555] whitespace-nowrap">CPU <span class="text-[#22dd77]">51°C</span></span>
    <span class="absolute left-[114px] top-[13px] w-[20px] h-[20px] rounded-full bg-[#3b9bff] text-white flex items-center justify-center"><svg width="10" height="10" viewBox="0 0 10 10" stroke="#fff" stroke-width="2.400"><path d="M0 5h10M5 0v10"/></svg></span>
  </div>
  <div class="absolute left-[1631px] top-[907px] w-[72px] h-[72px] rounded-full bg-[#3fd873]/75"></div>
  <div class="absolute left-[1628px] top-[922px] w-[70px] h-[70px] rounded-full bg-[#5fe08a]/70"></div>
  <div class="absolute left-[1640px] top-[914px] w-[68px] h-[76px] rounded-[45%] bg-[#45db78]/70"></div>
  <div class="absolute left-[1637px] top-[921px] w-[62px] h-[62px] rounded-full bg-[#f5f5f5] flex items-center justify-center text-[#555] [font-family:Roboto,sans-serif]"><span class="text-[29px] font-light leading-none tracking-[-1px]">52</span><span class="text-[15px] mt-[8px] ml-[1px]">%</span></div>

  <!-- sogou ime bar -->
  <div class="absolute left-[1704px] top-[998px] w-[215px] h-[32px] bg-white border border-[#c6d8ea] flex items-center text-[#0d6fd6] pl-[41px]">
    <span class="text-[18px] font-bold leading-[30px]">英</span>
    <span class="ml-[15px] w-[15px] text-[15px] font-bold leading-[20px] -mt-[2px]">•,</span>
    <svg class="ml-[14px]" width="16" height="22" viewBox="0 0 16 22" fill="none" stroke="#0d6fd6" stroke-width="1.800"><rect x="4.500" y="0" width="7" height="13" rx="3.500" fill="#0d6fd6" stroke="none"/><path d="M1 9c0 9 14 9 14 0M8 16v5M4 21h8"/></svg>
    <svg class="ml-[13px]" width="18" height="14" viewBox="0 0 18 14" fill="none" stroke="#0d6fd6" stroke-width="1.500"><rect x="1" y="1" width="16" height="12" rx="2"/><path stroke-dasharray="2 1" d="M3 4.500h12M3 7.500h12M5 10.500h8"/></svg>
    <svg class="ml-[12px]" width="18" height="16" viewBox="0 0 18 16" fill="#0d6fd6"><path d="M5 0l4 2 4-2 5 4-2 4-2-1v9H4V7L2 8 0 4z"/></svg>
    <svg class="ml-[12px]" width="17" height="16" viewBox="0 0 17 16" fill="#0d6fd6"><rect x="0" y="0" width="7.500" height="7" rx="3"/><rect x="9.500" y="0" width="7.500" height="7" rx="3"/><rect x="0" y="9" width="7.500" height="7" rx="3"/><rect x="9.500" y="9" width="7.500" height="7" rx="3"/></svg>
  </div>
  <svg class="absolute left-[1698px] top-[992px]" width="40" height="38" viewBox="0 0 40 38"><path fill="#f2581c" d="M6 0l34 5-6 33L0 32z"/><path fill="none" stroke="#fff" stroke-width="4.500" d="M31 12C25 7 12 8 11 12c0 6 19 4 18 10 0 5-14 6-21 2"/></svg>
</div>

<script>
  // spreadsheet grid
  var grid = document.getElementById('grid');
  var cols = 'ABCDEFGHIJKLMNOPQRSTU'.split('');
  var html = '<div class="relative bg-[#e6e6e6] border-r border-b border-[#b4b4b4]"><svg class="absolute left-[15px] top-[5px]" width="20" height="18" viewBox="0 0 20 18"><path fill="#b4b4b4" d="M20 0v18H0z"/></svg></div>';
  cols.forEach(function (c) {
    var cls = 'bg-[#e6e6e6] border-r border-b border-r-[#b4b4b4] border-b-[#9e9e9e] text-center leading-[30px] text-[#444]';
    if (c === 'G') cls = 'bg-[#d2d2d2] border-r border-b-2 border-r-[#b4b4b4] border-b-[#217346] text-center leading-[30px] text-[#217346]';
    html += '<div class="' + cls + '">' + c + '</div>';
  });
  html += '<div class="bg-[#e6e6e6] border-b border-[#9e9e9e]"></div>';

  var stock = [['彩盒', 44855], ['宠物用品', 48595], ['服装', 6902], ['警告标', 48619], ['暖靴', 68462], ['睡袋', 147161]];
  var line = 'border-r border-b border-[#d6d6d6]';
  var black = 'border-r border-b border-black';

  for (var r = 1; r <= 26; r++) {
    if (r === 3) html += '<div class="bg-[#d2d2d2] border-r-2 border-b border-r-[#217346] border-b-[#b4b4b4] text-center text-[#217346] leading-[28px]">3</div>';
    else if (r <= 7) html += '<div class="bg-[#e6e6e6] border-r border-b border-r-black border-b-[#b4b4b4] text-center text-[#444] leading-[28px]">' + r + '</div>';
    else html += '<div class="bg-[#e6e6e6] border-r border-b border-[#b4b4b4] text-center text-[#444] leading-[28px] overflow-hidden">' + (r <= 25 ? r : '') + '</div>';

    cols.forEach(function (c) {
      if (r === 1 && c === 'A') html += '<div class="col-span-2 ' + black + ' text-center text-[17px] leading-[28px]">库存表</div>';
      else if (r === 1 && c === 'B') return;
      else if (r === 1 && c === 'E') html += '<div class="col-span-3 ' + line + ' text-center text-[19px] leading-[28px]">出库单</div>';
      else if (r === 1 && (c === 'F' || c === 'G')) return;
      else if (r >= 2 && r <= 7 && c === 'A') html += '<div class="' + black + ' pl-[3px] text-[17px] leading-[30px] whitespace-nowrap">' + stock[r - 2][0] + '</div>';
      else if (r >= 2 && r <= 7 && c === 'B') html += '<div class="' + black + ' pr-[2px] text-right leading-[31px]">' + stock[r - 2][1] + '</div>';
      else if (r === 2 && c === 'E') html += '<div class="' + line + ' pl-[4px] text-[19px] leading-[30px]">日期</div>';
      else if (r === 2 && c === 'F') html += '<div class="' + line + ' pl-[3px] text-[19px] leading-[30px]">产品</div>';
      else if (r === 2 && c === 'G') html += '<div class="' + line + ' pl-[4px] text-[19px] leading-[30px]">数量</div>';
      else if (r === 3 && c === 'F') html += '<div class="' + line + ' pl-[3px] text-[19px] leading-[28px]">彩盒</div>';
      else if (r === 3 && c === 'G') html += '<div class="relative ' + line + '"><div class="absolute -left-[1px] -top-[2px] w-[89px] h-[28px] border-2 border-[#217346]"></div><div class="absolute left-[84px] top-[22px] w-[6px] h-[6px] bg-[#217346] border border-white"></div></div>';
      else html += '<div class="' + line + '"></div>';
    });
    html += '<div class="border-b border-[#d6d6d6]"></div>';
  }
  grid.innerHTML = html;
</script>
</body>
</html>
